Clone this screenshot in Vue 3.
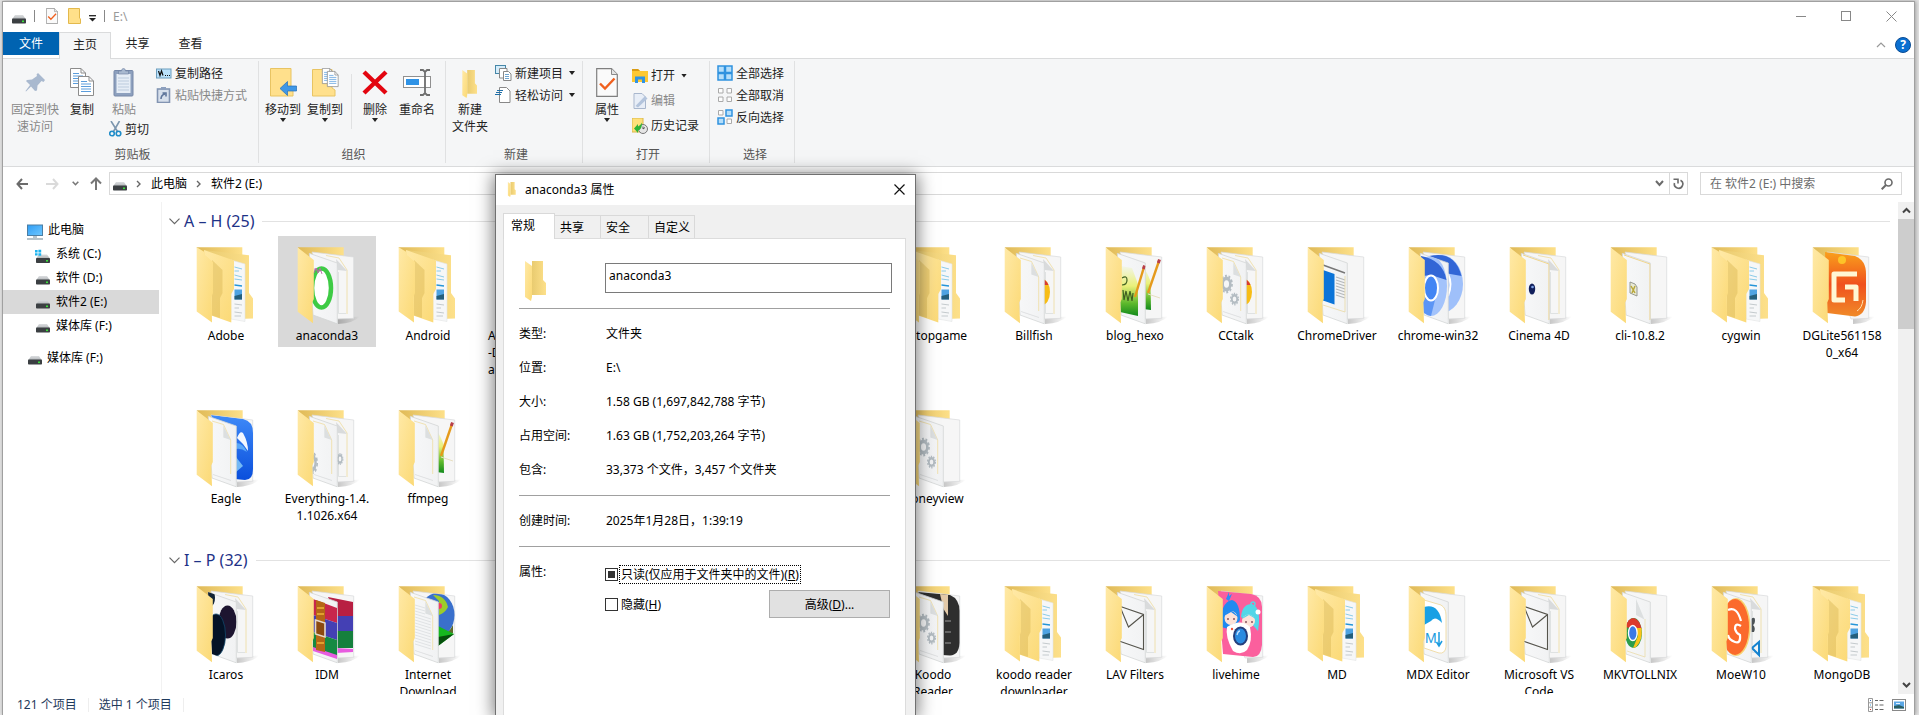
<script setup>
import { ref } from 'vue'

const drives = [
  { name: '系统 (C:)', icon: 'i-drive-win' },
  { name: '软件 (D:)', icon: 'i-drive' },
  { name: '软件2 (E:)', icon: 'i-drive', active: true },
  { name: '媒体库 (F:)', icon: 'i-drive' },
]

const groups = [
  {
    title: 'A – H (25)',
    rows: [
      [
        { col: 1, name: 'Adobe', nested: true },
        { col: 2, name: 'anaconda3', front: 'f-ring', back: 'b-doc', selected: true },
        { col: 3, name: 'Android', nested: true },
        { col: 4, name: 'A\n-D\na', nested: true, edge: true },
        { col: 8, name: 'laptopgame', nested: true },
        { col: 9, name: 'Billfish', front: 'f-doc', back: 'b-chrome' },
        { col: 10, name: 'blog_hexo', front: 'f-grass', back: 'b-grass' },
        { col: 11, name: 'CCtalk', front: 'f-gears', back: 'b-chrome' },
        { col: 12, name: 'ChromeDriver', front: 'f-window' },
        { col: 13, name: 'chrome-win32', front: 'f-chromium', back: 'b-chromium' },
        { col: 14, name: 'Cinema 4D', front: 'f-ball', back: 'b-doc' },
        { col: 15, name: 'cli-10.8.2', front: 'f-script' },
        { col: 16, name: 'cygwin', nested: true },
        { col: 17, name: 'DGLite561158\n0_x64', cover: 'c-dg' },
      ],
      [
        { col: 1, name: 'Eagle', front: 'f-doc', back: 'b-eagle' },
        { col: 2, name: 'Everything-1.4.\n1.1026.x64', front: 'f-halfgear', back: 'b-gear' },
        { col: 3, name: 'ffmpeg', front: 'f-doc', back: 'b-grass' },
        { col: 8, name: 'Honeyview', front: 'f-gears' },
      ],
    ],
  },
  {
    title: 'I – P (32)',
    rows: [
      [
        { col: 1, name: 'Icaros', front: 'f-dark', back: 'b-doc' },
        { col: 2, name: 'IDM', front: 'f-rar', back: 'b-rar' },
        { col: 3, name: 'Internet\nDownload', front: 'f-striped', back: 'b-globe' },
        { col: 8, name: 'Koodo\nReader', front: 'f-gears', back: 'b-koodo' },
        { col: 9, name: 'koodo reader\ndownloader', nested: true },
        { col: 10, name: 'LAV Filters', front: 'f-mail', back: 'b-doc' },
        { col: 11, name: 'livehime', cover: 'c-live' },
        { col: 12, name: 'MD', nested: true },
        { col: 13, name: 'MDX Editor', front: 'f-md' },
        { col: 14, name: 'Microsoft VS\nCode', front: 'f-mail', back: 'b-doc' },
        { col: 15, name: 'MKVTOLLNIX', front: 'f-chrome' },
        { col: 16, name: 'MoeW10', front: 'f-moe', back: 'b-code' },
        { col: 17, name: 'MongoDB', nested: true },
      ],
    ],
  },
]

const facts = [
  ['类型:', '文件夹'],
  ['位置:', 'E:\\'],
  ['大小:', '1.58 GB (1,697,842,788 字节)'],
  ['占用空间:', '1.63 GB (1,752,203,264 字节)'],
  ['包含:', '33,373 个文件，3,457 个文件夹'],
]

const folderName = ref('anaconda3')
const search = ref('')
const hidden = ref(false)
</script>

<template>
  <div class="desktop">
    <svg class="sprite" width="0" height="0" aria-hidden="true">
      <defs>
        <linearGradient id="g-leaf" x1="0" y1="0" x2="1" y2="1">
          <stop offset="0" stop-color="#ffe9a6" /><stop offset="1" stop-color="#fbd975" />
        </linearGradient>
        <linearGradient id="g-back" x1="0" y1="0" x2="1" y2="0">
          <stop offset="0" stop-color="#dfb956" /><stop offset="1" stop-color="#fde089" />
        </linearGradient>
        <linearGradient id="g-mid" x1="0" y1="0" x2="1" y2="0">
          <stop offset="0" stop-color="#e9cb70" /><stop offset="1" stop-color="#fde08a" />
        </linearGradient>
        <linearGradient id="g-page" x1="0" y1="0" x2="1" y2="0">
          <stop offset="0" stop-color="#f7f8f9" /><stop offset="1" stop-color="#f1f2f3" />
        </linearGradient>
        <linearGradient id="g-drive" x1="0" y1="0" x2="0" y2="1">
          <stop offset="0" stop-color="#dcdee0" /><stop offset="1" stop-color="#aeb2b5" />
        </linearGradient>
        <linearGradient id="g-screen" x1="0" y1="0" x2="1" y2="1">
          <stop offset="0" stop-color="#2f9df5" /><stop offset="1" stop-color="#6fc8ff" />
        </linearGradient>
        <linearGradient id="g-grass" x1="0" y1="0" x2="0" y2="1">
          <stop offset="0" stop-color="#f2f5ea" /><stop offset=".4" stop-color="#eaf07a" />
          <stop offset=".75" stop-color="#5cb82c" /><stop offset="1" stop-color="#128a1c" />
        </linearGradient>
        <linearGradient id="g-eagle" x1="0" y1="0" x2="0" y2="1">
          <stop offset="0" stop-color="#3f8af8" /><stop offset="1" stop-color="#0a4fdc" />
        </linearGradient>
        <linearGradient id="g-shadow" x1="0" y1="0" x2="1" y2="0">
          <stop offset="0" stop-color="#000" stop-opacity=".22" /><stop offset="1" stop-color="#000" stop-opacity="0" />
        </linearGradient>
        <linearGradient id="g-orange" x1="0" y1="0" x2="0" y2="1">
          <stop offset="0" stop-color="#f9a01c" /><stop offset=".5" stop-color="#f0501e" /><stop offset="1" stop-color="#f08a28" />
        </linearGradient>
        <clipPath id="clip-front"><path d="M31 17L59.500 27V88L35 79Z" /></clipPath>
        <clipPath id="clip-back"><path d="M34 16L76 21V82.500L58 83Z" /></clipPath>

        <symbol id="i-drive" viewBox="0 0 14 9">
          <path d="M3 .5h8L14 5H0z" fill="url(#g-drive)" />
          <rect y="4" width="14" height="5" rx=".8" fill="#3b3f42" />
          <rect x="10" y="6" width="2" height="1.600" fill="#3be03b" />
        </symbol>
        <symbol id="i-drive-win" viewBox="0 0 15 14">
          <path d="M4 5.500h8L15 9.500H1z" fill="url(#g-drive)" />
          <rect x="1" y="9" width="14" height="5" rx=".8" fill="#3b3f42" />
          <rect x="11" y="11" width="2" height="1.600" fill="#3be03b" />
          <path d="M0 1h2.600v2.400H0zM3.400 .7H6.200v2.700H3.400zM0 4.200h2.600v2.300H0zM3.400 4.200H6.200v2.600H3.400z" fill="#1db4f0" />
        </symbol>
        <symbol id="i-folder" viewBox="0 0 22 40">
          <path d="M7 0H18V19L21 22V34H7Z" fill="url(#g-mid)" />
          <path d="M0 0L7 5V36L6 40L0 36Z" fill="url(#g-leaf)" />
        </symbol>
        <symbol id="i-check-page" viewBox="0 0 22 29">
          <path d="M.7.7H15.500L21.300 6.500V28.300H.7Z" fill="#fafafa" stroke="#7f7f7f" stroke-width="1.200" />
          <path d="M15.500.7V6.500H21.300" fill="#e4e4e4" stroke="#8a8a8a" />
          <path d="M4 15.500L9 20.500L18.500 10.500" fill="none" stroke="#f0601e" stroke-width="2.400" />
        </symbol>
        <g id="sheet">
          <path d="M.5.500H11L15.500 5V19.500H.500Z" fill="#fff" stroke="#8c8c8c" />
          <path d="M11 .5V5H15.500" fill="none" stroke="#8c8c8c" />
          <path d="M3 5.500H9M3 8H13M3 10.500H13M3 13H13M3 15.500H13" stroke="#5b9ddc" />
        </g>
        <symbol id="i-copy" viewBox="0 0 24 28">
          <use href="#sheet" /><use href="#sheet" x="8" y="8" />
        </symbol>

        <g id="gear">
          <circle r="4.500" fill="none" stroke="#b3bcc2" stroke-width="3" />
          <circle r="6.500" fill="none" stroke="#b3bcc2" stroke-width="2" stroke-dasharray="2.200 1.900" />
        </g>
        <g id="f-doc">
          <path d="M35 22L46.500 25.500L53.700 41V75" fill="none" stroke="#efdca0" stroke-width=".8" />
          <path d="M46.300 26.500V38.500L53.700 41Z" fill="#dcdfe0" />
          <path d="M36 75.500L54 81.500" stroke="#d5d7d8" stroke-width=".7" />
        </g>
        <g id="b-doc">
          <path d="M48 19.500L61 22L69 34V78" fill="none" stroke="#efdca0" stroke-width=".8" />
          <path d="M58 23L69 35L59.500 34Z" fill="#d9dbdc" />
          <path d="M60.500 36V77.500H68" fill="none" stroke="#d9dddd" stroke-width=".8" />
        </g>
        <g id="f-gears">
          <use href="#f-doc" />
          <use href="#gear" transform="translate(39.500 48) scale(.85 1.250)" />
          <use href="#gear" transform="translate(47.500 63) scale(.6 .85)" />
        </g>
        <g id="f-halfgear">
          <use href="#f-doc" />
          <use href="#gear" transform="translate(34 64) scale(.8 1.500)" />
        </g>
        <g id="b-gear">
          <use href="#b-doc" />
          <use href="#gear" transform="translate(62 60) scale(.45 .8)" />
        </g>
        <g id="f-ring">
          <ellipse cx="43.500" cy="52" rx="9.500" ry="19.500" fill="#fff" stroke="#3ecb45" stroke-width="4.500" />
          <path d="M36 37L38 32L40 37L42 32L44 38M36 33L43 35" fill="none" stroke="#b868a8" stroke-width=".9" />
        </g>
        <g id="grass-art">
          <path d="M35 30L46 32L52 48V80L34 76Z" fill="url(#g-grass)" />
          <path d="M36 42q5-3 5 2t-5 5M37 54l1 10l2-9l2 10l2-10l2 10l1-8" fill="none" stroke="#3f5f20" stroke-width="1.200" />
          <path d="M58 31L49 61" stroke="#e59a1c" stroke-width="2.400" />
          <path d="M58.500 29.500L57.300 33" stroke="#b8404a" stroke-width="2.800" />
        </g>
        <g id="f-grass"><use href="#grass-art" /></g>
        <g id="b-grass">
          <path d="M57 30Q62 38 64.500 45L65 74L57 73Z" fill="url(#g-grass)" />
          <path d="M73 25L62 57" stroke="#e59a1c" stroke-width="2.400" />
          <path d="M73.500 23.500L72.300 27" stroke="#b8404a" stroke-width="3" />
          <path d="M62 58L74 62" stroke="#e8dfc0" />
        </g>
        <g id="b-chrome">
          <use href="#b-doc" />
          <ellipse cx="57" cy="56" rx="8" ry="13" fill="#f7bd16" />
          <path d="M56 43Q61 43 63.500 49H56Z" fill="#d83a30" />
        </g>
        <g id="f-window">
          <path d="M35 29L57 37" stroke="#777" stroke-width="1.600" />
          <path d="M35 34L46.500 38V68.500L35 64.500Z" fill="#0b74d8" />
          <path d="M48 41L57 44M48 44L57 47M48 47L57 50M48 50L57 53M48 53L57 56M48 56L57 59M48 59L57 62" stroke="#b5b9bc" stroke-width="1.200" />
          <path d="M35 69L57 76V40" fill="none" stroke="#ead9a4" stroke-width=".8" />
        </g>
        <g id="f-chromium">
          <ellipse cx="42" cy="50" rx="16" ry="30" fill="#a3c3fb" />
          <path d="M32 20Q54 24 57.500 44L42 39L34 40Z" fill="#3266d6" />
          <path d="M30 42L47 60L42 80Q33 78 31 70Z" fill="#5c95f5" />
          <ellipse cx="42" cy="52" rx="7" ry="12.500" fill="#4285f4" stroke="#fff" stroke-width="2" />
        </g>
        <g id="b-chromium">
          <ellipse cx="52" cy="48" rx="22" ry="29" fill="#9fc0fa" />
          <path d="M40 20Q66 14 72.500 40L50 36Z" fill="#3266d6" />
          <path d="M59 38Q64 48 59 60" fill="none" stroke="#fff" stroke-width="2" />
        </g>
        <g id="f-ball">
          <ellipse cx="42" cy="53" rx="3.200" ry="5.500" fill="#12205c" />
          <circle cx="42.500" cy="51" r="1.300" fill="#7fa3e8" />
          <path d="M33 19L59 28V84" fill="none" stroke="#f0d58c" stroke-width="1" />
        </g>
        <g id="f-script">
          <path d="M39 46L44 48L46 51V60L39 57Z" fill="#e9ead4" stroke="#8c8f88" stroke-width=".9" />
          <path d="M40 50l4 7M44 50l-3 7" stroke="#b9a73a" stroke-width="1.500" />
          <path d="M33 19L59 28V84" fill="none" stroke="#f0d58c" stroke-width="1" />
        </g>
        <g id="b-eagle">
          <path d="M34 16L66 20Q76 22 76 34V70Q76 81 68 81L58 80Z" fill="url(#g-eagle)" />
          <path d="M60 39Q63 31 66 34Q71 43 71 52Q66 44 60 39Z" fill="#fff" opacity=".95" />
          <path d="M59 44Q66 44 70 53Q64 49 59 50Z" fill="#5aa8f8" />
          <path d="M59 58L66 67L59 73Z" fill="#74b9f5" />
        </g>
        <g id="f-dark">
          <ellipse cx="34" cy="23" rx="4" ry="8" fill="#122436" />
          <ellipse cx="50.500" cy="47" rx="9" ry="16.500" fill="#1d1530" />
          <ellipse cx="39" cy="60" rx="9.500" ry="21" fill="#041226" stroke="#12496c" stroke-width=".8" />
        </g>
        <g id="f-rar">
          <path d="M35 24L59 33V48L35 40Z" fill="#c8264c" />
          <path d="M35 40L59 48V65L35 57Z" fill="#4440b4" />
          <path d="M35 57L59 65V81L35 74Z" fill="#158a42" />
          <path d="M35 72L59 80V84L35 76Z" fill="#e85ce0" />
          <path d="M38 25L47 28V77L38 75Z" fill="#b56716" />
          <path d="M39 33h7M39 39h7M39 68h7" stroke="#f0b437" stroke-width="1.500" />
          <path d="M37.500 45L47 48V62L37.500 59Z" fill="#8c4a10" stroke="#e5d9cc" stroke-width="1.600" />
        </g>
        <g id="b-rar">
          <path d="M50 22L75 27V42H58Z" fill="#b81f42" />
          <path d="M58 41H75V57H58Z" fill="#4440b4" />
          <path d="M58 56H75V73H58Z" fill="#15803d" />
          <path d="M58 73L75 74V77L58 78Z" fill="#e85ce0" />
        </g>
        <g id="f-striped">
          <use href="#f-doc" />
          <path d="M36 30L46 33M36 33L46 36M36 36L46 39M36 39L52 44M36 42L52 47M36 45L52 50M36 48L52 53M36 51L52 56M36 54L52 59M36 57L52 62M36 60L52 65M36 63L52 68M36 66L52 71M36 69L52 74" stroke="#dfe2e4" stroke-width="1" />
        </g>
        <g id="b-globe">
          <ellipse cx="58" cy="40" rx="17.500" ry="22" fill="#3a70cc" />
          <path d="M54 20Q66 20 69 32Q66 38 60 40V26Z" fill="#9ccc2a" />
          <circle cx="60" cy="31" r="3" fill="#ed3d66" />
          <path d="M60 57Q68 62 74 50V58L60 60Z" fill="#5e6a2c" />
          <path d="M59 51L75 59L59 71Z" fill="#15b81f" />
          <path d="M59 62L75 59L59 71Z" fill="#064f0c" />
        </g>
        <g id="b-koodo">
          <path d="M34 17L66 20Q75.500 24 75.500 36V68Q75 80 66 80.500L58 80Z" fill="#2e2e2e" />
          <path d="M56 19L64 20V41L59.500 34Z" fill="#e2c9a8" />
          <path d="M61 46h6M61 57h6M61 68h6" stroke="#9a9a9a" stroke-width="1" />
        </g>
        <g id="f-mail">
          <path d="M33 31L57.500 39.500V74.500L33 66" fill="none" stroke="#55544c" stroke-width="1.100" />
          <path d="M35 34L42.500 52L57 40" fill="none" stroke="#55544c" stroke-width="1.100" />
        </g>
        <g id="f-md">
          <path d="M35 25L52 30Q57 33 57 40V72Q56 79 50 78L35 73Z" fill="#fff" stroke="#f0ddaa" />
          <path d="M35 32Q50 28 53 48Q46 40 42 46L35 50Z" fill="#18a0e4" />
          <text x="36" y="68" font-size="14" fill="#1c9ce0" class="art-text">M</text>
          <path d="M50 57V71M47.500 67L50 71L53 66" fill="none" stroke="#1c9ce0" stroke-width="1.500" />
        </g>
        <g id="f-chrome">
          <path d="M45 24V40L53.500 44.500Z" fill="#dcdfe0" />
          <ellipse cx="42.500" cy="58" rx="8.500" ry="15" fill="#2c9d4b" />
          <path d="M34.500 52Q37 43 43 43Q49 45 50.500 54H42Z" fill="#dc3a2d" />
          <path d="M43 53H50.500Q52 65 45 72L42 73L47 61Z" fill="#fac41b" />
          <ellipse cx="41.800" cy="58" rx="4.300" ry="7.500" fill="#3b79e6" stroke="#fff" stroke-width="1.300" />
          <path d="M54 44V82L36 76" fill="none" stroke="#eadca9" stroke-width=".8" />
        </g>
        <g id="f-moe">
          <ellipse cx="44" cy="52" rx="14.500" ry="29" fill="#f8d270" />
          <ellipse cx="43" cy="52" rx="14" ry="28" fill="#fb6a2c" />
          <path d="M36 35Q45 31 49 46M49 51Q43 47 43 54Q44 58 48 60Q49 69 43 67Q37 65 36 60" fill="none" stroke="#fff" stroke-width="2.200" />
        </g>
        <g id="b-code">
          <use href="#b-doc" />
          <path d="M59 44q4-3 4 1t-2 5q3 3 1 7h-3z" fill="#4c5256" />
          <path d="M60 73L67 67V80Z" fill="none" stroke="#1583d0" stroke-width="2" />
        </g>
        <g id="c-dg">
          <path d="M32 16L62 20Q73 24 73 38V66Q72 79 62 80.500L34 77Z" fill="url(#g-orange)" />
          <circle cx="49" cy="24" r="4" fill="#ffd22c" opacity=".8" />
          <path d="M64 38H41V64H52M52 51H63V65" fill="none" stroke="#fff6d4" stroke-width="5" stroke-linejoin="round" />
          <path d="M64 75Q69 72 70 64" fill="none" stroke="#ffe2b0" stroke-width="1" />
        </g>
        <g id="c-live">
          <path d="M31 16L64 19Q75 21 75 32V70Q74 82 66 82L36 79Z" fill="#fb5f9d" />
          <path d="M34 52Q33 27 45 25Q53 27 53 45L46 55Z" fill="#1f8af0" />
          <path d="M39 24L42 17L42 21L45 19L42 26Z" fill="#2a8df5" />
          <path d="M54 42Q55 29 65 29Q73 32 72 48L71 56L64 48Z" fill="#53d6e8" />
          <circle cx="66" cy="29" r="2" fill="none" stroke="#53d6e8" stroke-width="1.500" />
          <ellipse cx="44" cy="43" rx="6.500" ry="7" fill="#fde2d8" />
          <ellipse cx="61.500" cy="46" rx="6.500" ry="6.500" fill="#fde2d8" />
          <path d="M37 41Q43 30 51 42L44 37Z" fill="#1f8af0" />
          <path d="M55 44Q61 35 69 44L62 40Z" fill="#53d6e8" />
          <path d="M41 43v2M47 43v2M59 46v2M65 46v2" stroke="#6b3344" stroke-width="1.200" />
          <circle cx="71" cy="37" r="2.500" fill="#fff" />
          <path d="M40 52Q54 43 63 52Q66 66 60 75Q54 81 46 76Q38 62 40 52Z" fill="#fff" />
          <ellipse cx="53.500" cy="61" rx="7.500" ry="9.500" fill="#243f7c" />
          <ellipse cx="53.500" cy="61" rx="5.500" ry="7.500" fill="#2a8be0" />
          <path d="M50 60q1-4 3-4" fill="none" stroke="#bfe0ff" stroke-width="1.300" />
          <circle cx="45" cy="54" r="1.200" fill="#f0523c" />
        </g>

        <g id="nested">
          <path d="M19.700 11.300H65.300V30H24Z" fill="url(#g-back)" />
          <path d="M27 14L72 19.300V57L76 62.500V82.500L60 83Z" fill="url(#g-mid)" />
          <path d="M54 24L68 28V85.500L54 83Z" fill="#f6f7f8" stroke="#e3e4e4" stroke-width=".6" />
          <path d="M57.500 31L65 33M57.500 35H62M57.500 39L65 41M57.500 43L65 44" stroke="#8ccbe8" stroke-width="1" />
          <path d="M57.500 49L65 50" stroke="#2595d8" stroke-width="1.300" />
          <rect x="57.500" y="53.500" width="7.500" height="10" fill="#4ea3e2" />
          <path d="M57.500 60L65 58V63.500H57.500Z" fill="#245f7c" />
          <path d="M57.500 68L65 69M57.500 72H62M57.500 76L65 77M57.500 80H64" stroke="#c4cacd" stroke-width="1" />
          <path d="M27 14L57 24.500V53L54.300 58V86.500L30 78Z" fill="url(#g-leaf)" />
          <path d="M35 24L45.500 34V57L43 62V82L35 79.500Z" fill="#d9b552" opacity=".45" />
          <path d="M19.700 11.300L27.500 16L28 19L36 26V57L34.500 61L35 86.500L19.700 75.500Z" fill="url(#g-leaf)" />
        </g>
        <g id="shell-back">
          <path d="M60 82L82 80.500Q76 87 60 88Z" fill="url(#g-shadow)" />
          <path d="M19.700 11.300H65.700V24H30Z" fill="url(#g-back)" />
          <path d="M34 16L75.700 21V82.300L58 83Z" fill="#f6f6f6" stroke="#d9dadb" stroke-width=".7" />
        </g>
        <g id="shell-page">
          <path d="M31.300 17.300L59.300 27V87.800L35 79Z" fill="url(#g-page)" stroke="#d3d5d6" stroke-width=".8" />
        </g>
        <path id="shell-leaf" d="M19.700 11.600L35.800 24V63L34.300 66.500L35 87.300L19.700 75.700Z" fill="url(#g-leaf)" />
      </defs>
    </svg>

    <section class="window" aria-label="E:\">
      <header class="titlebar">
        <svg width="14" height="10"><use href="#i-drive" width="14" height="10" /></svg>
        <i class="bar first"></i>
        <button class="qat" aria-label="属性"><svg width="12" height="16"><use href="#i-check-page" width="12" height="16" /></svg></button>
        <button class="qat" aria-label="新建文件夹">
          <svg width="13" height="16" viewBox="0 0 13 16"><path d="M.5.5H11.500V10L12.500 11V15.500H.5Z" fill="#ffe08a" stroke="#e3b94c" /></svg>
        </button>
        <button class="qat caret-btn" aria-label="自定义快速访问工具栏">
          <svg width="7" height="7" viewBox="0 0 7 7"><path d="M0 .7H7" stroke="#222" stroke-width="1.300" /><path d="M0 3H7L3.500 6.600Z" fill="#222" /></svg>
        </button>
        <i class="bar last"></i>
        <span class="path">E:\</span>
        <div class="controls">
          <button aria-label="最小化"><svg width="10" height="10"><path d="M0 5.500H10" stroke="#888" /></svg></button>
          <button aria-label="最大化"><svg width="10" height="10"><rect x=".5" y=".5" width="9" height="9" fill="none" stroke="#888" /></svg></button>
          <button aria-label="关闭"><svg width="11" height="11"><path d="M.5.5L10.500 10.500M10.500.5L.5 10.500" stroke="#888" /></svg></button>
        </div>
      </header>

      <nav class="tabs" aria-label="功能区">
        <button class="file">文件</button>
        <button class="tab current">主页</button>
        <button class="tab">共享</button>
        <button class="tab">查看</button>
        <div class="tab-tools">
          <button aria-label="折叠功能区"><svg width="10" height="6"><path d="M1 5L5 1L9 5" fill="none" stroke="#999" stroke-width="1.200" /></svg></button>
          <button class="help" aria-label="帮助">?</button>
        </div>
      </nav>

      <div class="ribbon">
        <div class="group clip">
          <div class="tools">
            <button class="big w56 dim">
              <svg width="22" height="30" viewBox="0 0 22 30"><path d="M14 5L21 12L19.500 14L17.500 13L13.500 17.500L13 22.500L11 23L7 18.500L2 23.500L1.500 23L6 17L2 13L3 12L8 11.500L13 8L12.500 6.500Z" fill="#a9b9cf" /></svg>
              <span>固定到快<br>速访问</span>
            </button>
            <button class="big w38"><svg width="24" height="30"><use href="#i-copy" width="24" height="28" /></svg><span>复制</span></button>
            <div class="stack">
              <button class="big w46 dim">
                <svg width="22" height="30" viewBox="0 0 22 30">
                  <rect x="1" y="2.500" width="19" height="25.500" rx="1" fill="#8da0be" stroke="#7688a8" />
                  <rect x="3.500" y="6" width="14" height="19" fill="#e6edf6" />
                  <path d="M5 10H16M5 13H16M5 16H16M5 19H16M5 22H16" stroke="#bccbdd" />
                  <path d="M5.500 6V3H8.500Q8.500.5 10.500.5T12.500 3H15.500V6Z" fill="#a9b9d0" stroke="#7688a8" stroke-width=".7" />
                </svg><span>粘贴</span>
              </button>
              <button class="small cut">
                <svg width="13" height="16" viewBox="0 0 13 16"><path d="M2 0L8.500 10.500M10.500 0L4.500 10.500" stroke="#7c96ae" stroke-width="1.600" /><circle cx="3" cy="12.500" r="2.300" fill="none" stroke="#1f8cc8" stroke-width="1.600" /><circle cx="9.500" cy="12.500" r="2.300" fill="none" stroke="#1f8cc8" stroke-width="1.600" /></svg>剪切
              </button>
            </div>
            <div class="list">
              <button class="small">
                <svg width="16" height="16" viewBox="0 0 16 16"><rect x=".5" y="4" width="14.500" height="9" fill="#b9e1fb" stroke="#6d9dbd" /><path d="M2.500 6L4 10.500L5.500 6L7 10.500M9 10.500h1M11 10.500h1M13 10.500h1" fill="none" stroke="#111" stroke-width="1.200" /></svg>复制路径
              </button>
              <button class="small dim">
                <svg width="16" height="16" viewBox="0 0 16 16"><rect x="1.500" y="2" width="12" height="13.500" fill="#d7e0ec" stroke="#8294b2" stroke-width="1.600" /><path d="M5 0h5v3H5z" fill="#8da0be" /><path d="M5 12q0-4 4-5M6.500 6H10V9.500" fill="none" stroke="#5f769b" stroke-width="1.600" /></svg>粘贴快捷方式
              </button>
            </div>
          </div>
          <p>剪贴板</p>
        </div>

        <div class="group organize">
          <div class="tools">
            <button class="big w42">
              <svg width="27" height="30" viewBox="0 0 27 30"><path d="M.5.5H21V20L23 22V28H.5Z" fill="#ffe08c" stroke="#e8c463" /><path d="M10 20.500L17.500 13.500V18H26.500V23H17.500V27.500Z" fill="#3f97e6" stroke="#226fb8" stroke-width=".7" /></svg>
              <span>移动到</span><i class="caret"></i>
            </button>
            <button class="big w42">
              <svg width="27" height="30" viewBox="0 0 27 30"><path d="M.5 1.500H20V20L23 22V28H.5Z" fill="#ffe08c" stroke="#e8c463" /><use href="#sheet" transform="translate(10 0) scale(.7 .8)" /><use href="#sheet" transform="translate(15 3) scale(.72 .8)" /></svg>
              <span>复制到</span><i class="caret"></i>
            </button>
            <i class="tool-sep"></i>
            <button class="big w40">
              <svg width="26" height="30" viewBox="0 0 26 30"><path d="M2 4L24 25M24 4L2 25" stroke="#e3050f" stroke-width="4.400" /></svg>
              <span>删除</span><i class="caret"></i>
            </button>
            <button class="big w44">
              <svg width="28" height="30" viewBox="0 0 28 30"><rect x=".5" y="8.500" width="27" height="11" fill="#fff" stroke="#909090" /><rect x="3" y="11" width="13" height="6" fill="#2f93e6" /><path d="M17 2H20L22 4L24 2H27M22 4V25M17 27H20L22 25L24 27H27" fill="none" stroke="#6e6e6e" stroke-width="1.800" /></svg>
              <span>重命名</span>
            </button>
          </div>
          <p>组织</p>
        </div>

        <div class="group create">
          <div class="tools">
            <button class="big w40"><svg width="20" height="30"><use href="#i-folder" y="2" width="20" height="28" /></svg><span>新建<br>文件夹</span></button>
            <div class="list">
              <button class="small">
                <svg width="17" height="16" viewBox="0 0 17 16"><rect x=".5" y=".5" width="10" height="8" fill="#d5edfb" stroke="#4687a8" /><path d="M4.500 3.500H12V13H4.500Z" fill="#fff" stroke="#888" /><path d="M8.500 6.500H13.500L16 9V15.500H8.500Z" fill="#fff" stroke="#888" /><path d="M10 9.500h4M10 11.500h4M10 13.500h4" stroke="#6fa5cf" /></svg>新建项目<i class="caret"></i>
              </button>
              <button class="small">
                <svg width="17" height="16" viewBox="0 0 17 16"><path d="M4.500.5H11.500L15 4V15.500H4.500Z" fill="#fff" stroke="#888" /><path d="M2 3.500H8M1 5.500H7M0 7.500H6" stroke="#2170a8" stroke-width="1.200" /></svg>轻松访问<i class="caret"></i>
              </button>
            </div>
          </div>
          <p>新建</p>
        </div>

        <div class="group open">
          <div class="tools">
            <button class="big w40"><svg width="22" height="30"><use href="#i-check-page" width="22" height="29" /></svg><span>属性</span><i class="caret"></i></button>
            <div class="list roomy">
              <button class="small">
                <svg width="16" height="16" viewBox="0 0 16 16"><path d="M0 1H6L8 3H16V14H0Z" fill="#fcc833" /><path d="M0 1H6L8 3H0Z" fill="#d99c14" /><path d="M3 15V8.500H13V15H10V11.500H6V15Z" fill="#2e93e4" /></svg>打开<i class="caret"></i>
              </button>
              <button class="small dim">
                <svg width="16" height="16" viewBox="0 0 16 16"><path d="M2 .5H10L13.500 4V15.500H2Z" fill="#e8eef7" stroke="#a9b7cd" /><path d="M3.500 13L13 3L15.500 5.500L6 14.500Z" fill="#b3c4dc" /></svg>编辑
              </button>
              <button class="small">
                <svg width="16" height="16" viewBox="0 0 16 16"><path d="M0 0H11V14H0Z" fill="#ffe07a" stroke="#d9b84a" /><circle cx="11" cy="11" r="4.500" fill="#e5e5e5" stroke="#777" /><path d="M11 8.500V11L13 9.500" fill="none" stroke="#555" /><path d="M2 10.500L6 6V8.500Q9 7 10 4.500Q10 12 6 12.500V15Z" fill="#2fb336" /></svg>历史记录
              </button>
            </div>
          </div>
          <p>打开</p>
        </div>

        <div class="group choose">
          <div class="tools">
            <div class="list">
              <button class="small">
                <svg width="16" height="16" viewBox="0 0 16 16"><path d="M1 1H7.500V7.500H1ZM8.500 1H15V7.500H8.500ZM1 8.500H7.500V15H1ZM8.500 8.500H15V15H8.500Z" fill="#b5defa" stroke="#2f92df" stroke-width="1.500" /></svg>全部选择
              </button>
              <button class="small">
                <svg width="16" height="16" viewBox="0 0 16 16"><path d="M1.500 1.500H6V6H1.500ZM10 1.500H14.500V6H10ZM1.500 10H6V14.500H1.500ZM10 10H14.500V14.500H10Z" fill="#fdfdfd" stroke="#aaa" /></svg>全部取消
              </button>
              <button class="small">
                <svg width="16" height="16" viewBox="0 0 16 16"><path d="M1.500 1.500H6V6H1.500ZM10 10H14.500V14.500H10Z" fill="#fdfdfd" stroke="#aaa" /><path d="M9 1H15V7H9ZM1 9H7V15H1Z" fill="#b5defa" stroke="#2f92df" stroke-width="1.500" /></svg>反向选择
              </button>
            </div>
          </div>
          <p>选择</p>
        </div>
      </div>

      <div class="address">
        <button aria-label="后退"><svg width="13" height="12"><path d="M12 6H1.500M6 1L1.500 6L6 11" fill="none" stroke="#6b6b6b" stroke-width="2" /></svg></button>
        <button aria-label="前进"><svg width="13" height="12"><path d="M0 6H11M7 1L11.500 6L7 11" fill="none" stroke="#dadada" stroke-width="2" /></svg></button>
        <button class="slim" aria-label="最近浏览的位置"><svg width="7" height="5"><path d="M.7.7L3.500 3.700L6.300.7" fill="none" stroke="#777" stroke-width="1.600" /></svg></button>
        <button class="up" aria-label="上移"><svg width="12" height="13"><path d="M6 13V1.500M1 6.500L6 1.500L11 6.500" fill="none" stroke="#777" stroke-width="2" /></svg></button>
        <div class="crumbs">
          <svg width="14" height="10"><use href="#i-drive" width="14" height="10" /></svg>
          <svg class="gt" width="5" height="8"><path d="M1 1L4 4L1 7" fill="none" stroke="#666" stroke-width="1.400" /></svg>
          <a href="#pc">此电脑</a>
          <svg class="gt" width="5" height="8"><path d="M1 1L4 4L1 7" fill="none" stroke="#666" stroke-width="1.400" /></svg>
          <a href="#e">软件2 (E:)</a>
          <button class="drop" aria-label="历史位置"><svg width="9" height="7"><path d="M1 1L4.500 5L8 1" fill="none" stroke="#6b6b6b" stroke-width="2" /></svg></button>
          <button class="refresh" aria-label="刷新"><svg width="11" height="12" viewBox="0 0 11 12"><path d="M7.500 2.300A4.200 4.200 0 1 1 1.500 5M.5 1.300H5V5.500" fill="none" stroke="#6b6b6b" stroke-width="1.600" /></svg></button>
        </div>
        <label class="search">
          <input v-model="search" type="text" placeholder="在 软件2 (E:) 中搜索" aria-label="搜索">
          <svg width="12" height="12"><circle cx="7.500" cy="4.500" r="3.500" fill="none" stroke="#6b6b6b" stroke-width="1.600" /><path d="M5 7L.7 11.300" stroke="#6b6b6b" stroke-width="2" /></svg>
        </label>
      </div>

      <div class="body">
        <nav class="tree" aria-label="导航窗格">
          <a href="#pc" class="node root">
            <svg width="16" height="16" viewBox="0 0 16 16"><rect x=".5" y="1" width="15" height="10.500" fill="url(#g-screen)" stroke="#4c7ea3" /><path d="M6 12H10V14H6Z" fill="#b8c4cc" /><path d="M0 15H16" stroke="#8fa2ae" stroke-width="1.300" /></svg>此电脑
          </a>
          <a v-for="d in drives" :key="d.name" href="#drive" class="node child" :class="{ active: d.active, win: d.icon === 'i-drive-win' }">
            <svg v-if="d.icon === 'i-drive-win'" width="15" height="14"><use :href="'#' + d.icon" width="15" height="14" /></svg>
            <svg v-else width="14" height="10"><use :href="'#' + d.icon" width="14" height="10" /></svg>{{ d.name }}
          </a>
          <a href="#f" class="node root spaced"><svg width="14" height="10"><use href="#i-drive" width="14" height="10" /></svg>媒体库 (F:)</a>
        </nav>

        <main class="files">
          <section v-for="g in groups" :key="g.title">
            <h2>
              <svg width="11" height="7"><path d="M.5.700L5.500 5.700L10.500.7" fill="none" stroke="#666" stroke-width="1.200" /></svg>{{ g.title }}<i></i>
            </h2>
            <div v-for="(row, r) in g.rows" :key="r" class="row">
              <div v-for="f in row" :key="f.name" class="tile" :class="{ selected: f.selected, edge: f.edge }" :style="{ gridColumn: f.col }">
                <svg width="98" height="91" viewBox="0 0 98 91" aria-hidden="true">
                  <use v-if="f.nested" href="#nested" />
                  <template v-else>
                    <use href="#shell-back" />
                    <g v-if="f.back" clip-path="url(#clip-back)"><use :href="'#' + f.back" /></g>
                    <use v-if="f.cover" :href="'#' + f.cover" />
                    <template v-else>
                      <use href="#shell-page" />
                      <g clip-path="url(#clip-front)"><use :href="'#' + f.front" /></g>
                    </template>
                    <use href="#shell-leaf" />
                  </template>
                </svg>
                <span>{{ f.name }}</span>
              </div>
            </div>
          </section>
        </main>

        <div class="scroll">
          <button aria-label="向上滚动"><svg width="9" height="7"><path d="M1 5.500L4.500 2L8 5.500" fill="none" stroke="#444" stroke-width="2" /></svg></button>
          <div class="thumb"></div>
          <button class="down" aria-label="向下滚动"><svg width="9" height="7"><path d="M1 1L4.500 4.500L8 1" fill="none" stroke="#444" stroke-width="2" /></svg></button>
        </div>
      </div>

      <footer class="status">
        <span>121 个项目</span>
        <span>选中 1 个项目</span>
        <div class="views">
          <button aria-label="详细信息"><svg width="16" height="14" viewBox="0 0 16 14"><path d="M.5.500H4.500V13.500H.5ZM.5 4.800H4.500M.5 9.200H4.500" fill="#fff" stroke="#999" /><path d="M7 2.500h3M11.500 2.500h4M7 7h3M11.500 7h4M7 11.500h3M11.500 11.500h4" stroke="#666" /><path d="M2 2.500h1" stroke="#3a70b8" /><path d="M2 7h1" stroke="#3aa0e0" /><path d="M2 11.500h1" stroke="#d03030" /></svg></button>
          <button aria-label="大图标"><svg width="14" height="12" viewBox="0 0 14 12"><rect x=".5" y=".5" width="13" height="11" fill="#fff" stroke="#888" /><rect x="2" y="2.500" width="10" height="7" fill="#5aa7e6" /><path d="M2 7L7 6L12 8V9.500H2Z" fill="#2a5e62" /><path d="M4 4.500h4" stroke="#e8f4ff" /></svg></button>
        </div>
      </footer>
    </section>

    <section class="dialog" role="dialog" aria-label="anaconda3 属性">
      <header>
        <svg width="10" height="15"><use href="#i-folder" width="10" height="15" /></svg>
        <h1>anaconda3 属性</h1>
        <button aria-label="关闭"><svg width="11" height="11"><path d="M.5.5L10.500 10.500M10.500.5L.5 10.500" stroke="#111" stroke-width="1.200" /></svg></button>
      </header>
      <div class="dtabs">
        <button class="on">常规</button><button class="t46">共享</button><button class="t48">安全</button><button class="t46 last">自定义</button>
      </div>
      <form class="sheet" @submit.prevent>
        <div class="name">
          <svg width="22" height="40"><use href="#i-folder" width="22" height="40" /></svg>
          <input v-model="folderName" type="text" aria-label="名称">
        </div>
        <hr>
        <dl>
          <template v-for="[k, v] in facts" :key="k"><dt>{{ k }}</dt><dd>{{ v }}</dd></template>
        </dl>
        <hr>
        <dl class="single"><dt>创建时间:</dt><dd>2025年1月28日，1:39:19</dd></dl>
        <hr>
        <div class="attrs">
          <span>属性:</span>
          <div class="checks">
            <div class="check"><input id="readonly" type="checkbox" class="partial" :indeterminate="true"><label for="readonly" class="focus">只读(仅应用于文件夹中的文件)(<u>R</u>)</label></div>
            <div class="check second"><input id="hidden" v-model="hidden" type="checkbox"><label for="hidden">隐藏(<u>H</u>)</label><button type="button">高级(<u>D</u>)...</button></div>
          </div>
        </div>
      </form>
    </section>
  </div>
</template>

<style>
html, body { margin: 0; overflow: hidden; }
</style>

<style scoped>
* { box-sizing: border-box; }
.desktop {
  position: relative;
  height: 100vh;
  overflow: hidden;
  padding: 1px 4px 0 2px;
  background: #e4e4e4;
  font: 12px/17px "Noto Sans", "Noto Sans CJK SC", sans-serif;
  color: #000;
}
.sprite { position: absolute; }
svg { display: block; flex: none; }
button { border: 0; padding: 0; margin: 0; background: none; font: inherit; color: inherit; }
button, a { display: flex; align-items: center; white-space: nowrap; }
a { color: inherit; text-decoration: none; }
.art-text { font-family: "Liberation Sans", sans-serif; }

.window {
  display: flex;
  flex-direction: column;
  height: 100%;
  border: 1px solid #a0a0a0;
  border-bottom: 0;
  background: #fff;
  box-shadow: 1px 0 4px rgba(0, 0, 0, .3);
}

.titlebar { display: flex; align-items: center; height: 30px; padding: 0 0 2px 9px; }
.titlebar > svg { margin-top: 6px; }
.bar { width: 1px; height: 12px; background: #888; }
.bar.first { margin: 0 11px 0 8px; }
.qat { margin-right: 10px; }
.qat.caret-btn { margin: 4px 8px 0 -2px; }
.path { margin-left: 8px; color: #999; }
.controls { display: flex; margin-left: auto; }
.controls button { width: 45px; height: 28px; justify-content: center; }
.controls button:last-child { width: 46px; }

.tabs { display: flex; height: 27px; border-bottom: 1px solid #dadbdc; }
.tabs button { justify-content: center; }
.file { width: 56px; height: 23px; background: #0063b1; color: #fff !important; }
.tab { width: 53px; height: 26px; padding-bottom: 3px; color: #222; }
.tab.current { width: 52px; height: 27px; border: 1px solid #dadbdc; border-bottom: 0; background: #f5f6f7; }
.tab-tools { display: flex; align-items: center; gap: 9px; margin-left: auto; padding-right: 3px; }
.help { width: 16px; height: 16px; border-radius: 50%; border: 1px solid #0a4c94; background: #0a6fd0; color: #fff; font-weight: 700; line-height: 14px; }

.ribbon { display: flex; background: #f5f6f7; border-bottom: 1px solid #dadbdc; }
.group { display: flex; flex-direction: column; margin: 2px 0 3px; border-right: 1px solid #e0e1e2; color: #222; }
.group p { margin: 0; height: 18px; line-height: 20px; text-align: center; color: #555; }
.tools { display: flex; height: 84px; }
.clip { width: 256px; padding-left: 4px; }
.organize { width: 187px; padding-left: 3px; }
.create { width: 137px; padding-left: 4px; }
.open { width: 127px; padding-left: 4px; }
.choose { width: 85px; padding-left: 6px; }
.big { position: relative; flex-direction: column; align-self: flex-start; padding-top: 7px; text-align: center; }
.big span { margin-top: 3px; }
.dim { color: #888; }
.w56 { width: 56px; } .w38 { width: 38px; } .w46 { width: 46px; }
.w42 { width: 42px; } .w40 { width: 40px; } .w44 { width: 44px; }
.stack { width: 53px; }
.stack .big { height: 57px; }
.cut { margin-left: 8px; }
.list { display: flex; flex-direction: column; padding: 1px 0 0 2px; }
.create .list, .open .list { padding-left: 5px; }
.choose .list { padding-left: 1px; }
.small { height: 22px; gap: 3px; }
.list.roomy { padding-top: 2px; }
.roomy .small { height: 25px; }
.tool-sep { width: 1px; height: 55px; margin: 13px 3px 0 5px; background: #e0e1e2; }
.caret { width: 6px; height: 4px; background: #222; clip-path: polygon(0 0, 100% 0, 50% 100%); }
.small .caret { margin-left: 3px; }

.address { display: flex; align-items: center; height: 35px; padding: 0 0 2px 4px; }
.address > button { width: 30px; height: 23px; justify-content: center; }
.address > button.slim { width: 12px; margin: 0 6px 0 2px; }
.address > button.up { width: 18px; margin-right: 4px; }
.crumbs { display: flex; align-items: center; flex: 1; height: 23px; border: 1px solid #d9d9d9; padding-left: 3px; }
.crumbs > svg:first-child { margin-top: 4px; }
.crumbs a { padding-bottom: 1px; }
.gt { margin: 0 10px 0 9px; }
.drop { width: 16px; justify-content: center; height: 21px; margin: 0 2px 0 auto; }
.refresh { width: 18px; height: 21px; justify-content: center; border-left: 1px solid #d9d9d9; }
.search { display: flex; align-items: center; width: 202px; height: 23px; margin: 0 12px; padding: 0 8px 0 9px; border: 1px solid #d9d9d9; }
.search input { flex: 1; min-width: 0; padding: 0; border: 0; outline: 0; background: none; font: inherit; }
.search input::placeholder { color: #6d6d6d; opacity: 1; }

.body { display: flex; flex: 1; min-height: 0; }
.tree { width: 159px; padding: 16px 2px 0 0; border-right: 1px solid #f2f2f2; }
.node { height: 24px; gap: 6px; padding-left: 33px; padding-bottom: 2px; }
.node svg { margin-top: 6px; }
.node.win { padding-left: 32px; }
.node.root { padding-left: 24px; gap: 5px; }
.node.spaced { margin-top: 8px; padding-left: 25px; }
.active { background: #d9d9d9; }
.files { flex: 1; min-width: 0; overflow: hidden; padding-top: 6px; }
h2 { display: flex; align-items: center; height: 26px; margin: 0 8px 2px 7px; font-size: 16px; font-weight: 400; line-height: 24px; color: #1e3287; }
h2 svg { margin-right: 4px; }
h2 i { flex: 1; height: 1px; margin-left: 8px; background: #e2e2e2; }
.row { display: grid; grid-template-columns: repeat(17, minmax(0, 1fr)); column-gap: 3px; align-items: start; height: 148px; padding: 0 7px 0 15px; }
.row + .row { margin-top: 15px; }
.tile { display: flex; flex-direction: column; align-items: center; padding-bottom: 3px; text-align: center; white-space: pre; }
.selected { background: #d9d9d9; }
.edge { align-items: flex-start; text-align: left; padding-left: 8px; }
.scroll { display: flex; flex-direction: column; width: 16px; background: #f0f0f0; }
.scroll button { height: 17px; justify-content: center; }
.thumb { height: 110px; background: #cdcdcd; }
.scroll .down { margin-top: auto; }

.status { display: flex; align-items: center; height: 21px; padding-left: 14px; color: #1e395b; }
.status span { padding-right: 11px; margin-right: 10px; border-right: 1px solid #eee; line-height: 14px; }
.views { display: flex; gap: 8px; margin-left: auto; padding-right: 8px; }

.dialog {
  position: absolute;
  top: 174px;
  left: 495px;
  display: flex;
  flex-direction: column;
  width: 421px;
  height: calc(100vh - 174px);
  border: 1px solid #707070;
  border-bottom: 0;
  background: #f0f0f0;
  box-shadow: 0 2px 16px 2px rgba(0, 0, 0, .5);
}
.dialog header { display: flex; align-items: center; height: 30px; padding: 0 10px 2px 11px; background: #fff; }
h1 { margin: 0 0 0 8px; font-size: 12px; font-weight: 400; line-height: 17px; }
.dialog header button { margin-left: auto; }
.dtabs { display: flex; align-items: flex-end; height: 33px; padding: 0 7px; }
.dtabs button { height: 23px; padding-left: 5px; border: 1px solid #d9d9d9; border-width: 1px 1px 0 0; }
.dtabs .on { position: relative; width: 52px; height: 26px; margin-bottom: -1px; padding: 0 0 2px 7px; border-left-width: 1px; background: #fff; }
.t46 { width: 46px; }
.t48 { width: 48px; }
.sheet { flex: 1; margin: 0 9px 0 7px; padding: 22px 15px 0; border: 1px solid #dcdcdc; border-bottom: 0; background: #fff; }
.name { display: flex; align-items: center; height: 40px; margin-left: 6px; margin-right: -2px; padding-bottom: 6px; }
.name input { flex: 1; min-width: 0; height: 30px; margin-left: 58px; padding: 0 3px 6px; border: 1px solid #7a7a7a; outline: 0; font: inherit; color: #000; }
.name svg { margin-top: 6px; }
hr { height: 1px; margin: 7px 0 0; border: 0; background: #a0a0a0; }
dl { display: grid; grid-template-columns: 87px 1fr; grid-auto-rows: 34px; align-items: center; margin: 8px 0 0; }
dd { margin: 0; padding-bottom: 2px; white-space: nowrap; }
dt { padding-bottom: 2px; white-space: nowrap; }
dl + hr { margin-top: 8px; }
dl.single { grid-auto-rows: 50px; margin: 0; }
dl.single + hr { margin-top: 0; }
.attrs { display: flex; padding-top: 16px; }
.attrs > span { width: 86px; }
.checks { flex: 1; }
.check { display: flex; align-items: center; height: 23px; gap: 2px; }
.check input { appearance: none; flex: none; width: 13px; height: 13px; margin: 0; border: 1px solid #333; background: #fff; }
.check .partial { background: #333; box-shadow: inset 0 0 0 2px #fff; }
.check label { padding: 0 1px; white-space: nowrap; }
.check .focus { outline: 1px dotted #000; }
.check.second { height: 28px; margin-top: 4px; }
.check button { width: 121px; height: 28px; margin-left: auto; justify-content: center; border: 1px solid #adadad; background: #e1e1e1; }
u { text-underline-offset: 1px; }
</style>
